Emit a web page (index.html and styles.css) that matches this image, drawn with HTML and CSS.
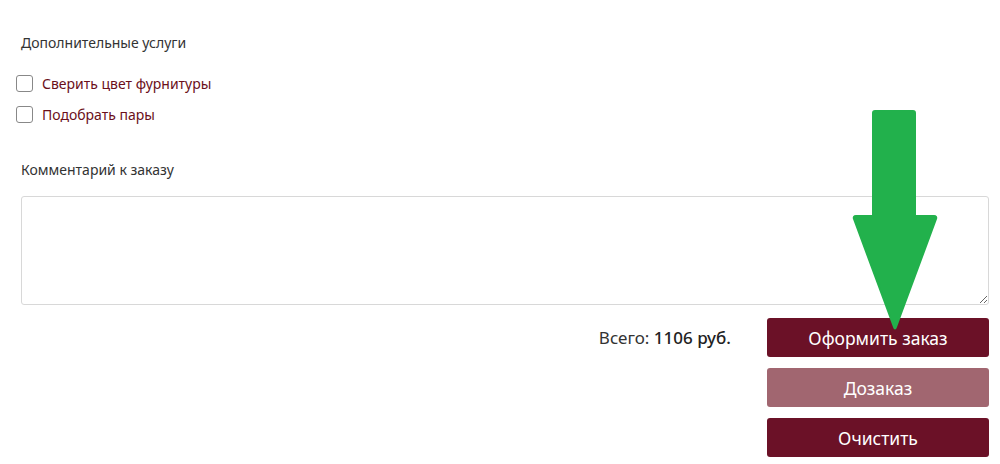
FILE: index.html
```html
<!DOCTYPE html>
<html lang="ru">
<head>
  <meta charset="UTF-8" />
  <title>Оформление заказа</title>
  <link rel="stylesheet" href="styles.css">
</head>
<body>
  <div class="order">
    <h3 class="order-title">Дополнительные услуги</h3>
    <div class="services">
      <label class="service"><input type="checkbox"><span>Сверить цвет фурнитуры</span></label>
      <label class="service"><input type="checkbox"><span>Подобрать пары</span></label>
    </div>

    <h3 class="order-title comment-title">Комментарий к заказу</h3>
    <textarea class="comment"></textarea>

    <div class="order-footer">
      <div class="total">Всего: <b>1106 руб.</b></div>
      <div class="actions">
        <button class="btn">Оформить заказ</button>
        <button class="btn btn-light">Дозаказ</button>
        <button class="btn">Очистить</button>
      </div>
    </div>

    <svg class="arrow" width="88" height="224" viewBox="0 0 88 224">
      <path d="M24 3 H62 Q64 3 64 5 V108 H83 Q86 108 85 111 L45 219 Q44 222 43 219 L3 111 Q2 108 5 108 H22 V5 Q22 3 24 3 Z" fill="#22b14c" stroke="#22b14c" stroke-width="2" stroke-linejoin="round"/>
    </svg>
  </div>
</body>
</html>
```

FILE: styles.css
```css
body {
  margin: 0;
  background: #fff;
  font-family: 'Noto Sans', 'Liberation Sans', sans-serif;
  color: #333;
}
.order {
  position: relative;
  padding: 33px 11px 0 16px;
}
.order-title {
  margin: 0 0 0 5px;
  font-size: 14px;
  font-weight: normal;
  line-height: 20px;
  color: #333;
}
.services {
  display: flex;
  flex-direction: column;
  gap: 11px;
  margin-top: 20px;
}
.service {
  display: flex;
  align-items: center;
  gap: 9px;
  height: 20px;
  font-size: 14px;
  color: #6b0f1a;
  cursor: pointer;
}
.service input {
  appearance: none;
  margin: 0;
  width: 17px;
  height: 17px;
  border: 1px solid #888;
  border-radius: 3px;
  background: #fff;
}
.comment-title {
  margin-top: 36px;
}
.comment {
  display: block;
  box-sizing: border-box;
  width: calc(100% - 5px);
  height: 109px;
  margin: 16px 0 0 5px;
  border: 1px solid #d8d8d8;
  border-radius: 3px;
  resize: vertical;
}
.order-footer {
  display: flex;
  justify-content: flex-end;
  align-items: flex-start;
  gap: 36px;
  margin-top: 13px;
}
.total {
  line-height: 39px;
  font-size: 17px;
  color: #333;
}
.total b {
  font-weight: 500;
  color: #222;
}
.actions {
  display: flex;
  flex-direction: column;
  gap: 11px;
  width: 222px;
}
.btn {
  height: 39px;
  border: none;
  border-radius: 3px;
  background: #6b1127;
  color: #fff;
  font-family: inherit;
  font-size: 17.5px;
  cursor: pointer;
}
.btn-light {
  background: #a16670;
}
.arrow {
  position: absolute;
  left: 851px;
  top: 108px;
}
```
